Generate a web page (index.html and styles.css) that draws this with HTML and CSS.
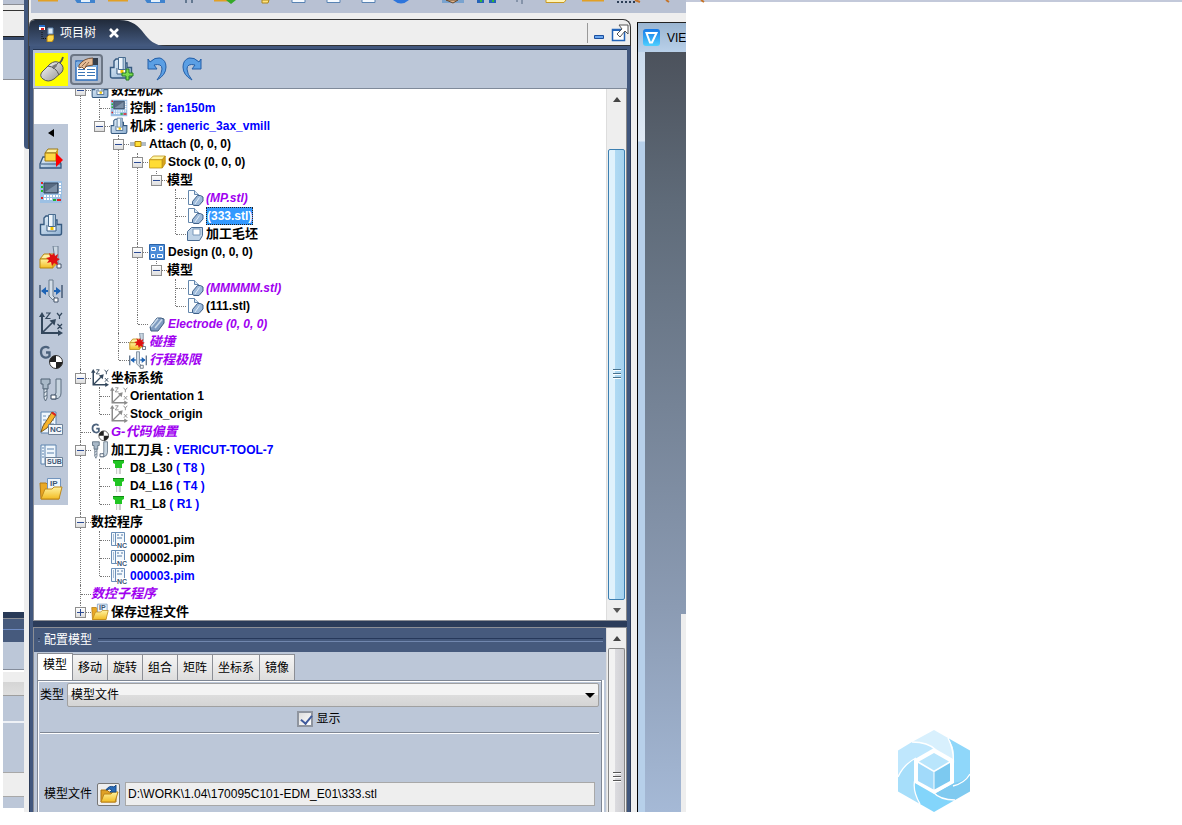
FILE: index.html
```html
<!DOCTYPE html>
<html lang="zh-CN">
<head>
<meta charset="utf-8">
<title>项目树</title>
<link rel="stylesheet" href="styles.css">
</head>
<body>
<svg class="defs" aria-hidden="true">
  <defs>
    <linearGradient id="gSteel" x1="0" y1="0" x2="1" y2="1"><stop offset="0" stop-color="#e6f1fa"/><stop offset="1" stop-color="#8fb0d2"/></linearGradient>
    <linearGradient id="gGold" x1="0" y1="0" x2="0" y2="1"><stop offset="0" stop-color="#fff3a0"/><stop offset="1" stop-color="#f2bb22"/></linearGradient>
    <linearGradient id="gMouse" x1="0" y1="0" x2="1" y2="1"><stop offset="0" stop-color="#fff"/><stop offset="1" stop-color="#8e8e8e"/></linearGradient>
    <linearGradient id="gTab" x1="0" y1="0" x2="0" y2="1"><stop offset="0" stop-color="#212b3b"/><stop offset="1" stop-color="#445a80"/></linearGradient>
    <linearGradient id="gView" x1="0" y1="0" x2="0" y2="1"><stop offset="0" stop-color="#1679e8"/><stop offset="1" stop-color="#4fd0ff"/></linearGradient>
  </defs>
  <symbol id="machine" viewBox="0 0 24 24">
    <path d="M1.500 11.500H5V5l2-2h4v4h7v4.500h4.500V20q0 2-2 2h-17q-2 0-2-2z" fill="url(#gSteel)" stroke="#365a80" stroke-width="1.400"/>
    <path d="M8 12v6h9v-6" fill="#fff" stroke="#365a80"/>
    <path d="M9.500 1.500h7v12h-7z" fill="#eef5fb" stroke="#486b8f"/><path d="M14.500 2v11" stroke="#7e9fbd" stroke-width="2"/><path d="M11.500 14h3v3h-3z" fill="#f3c400"/>
  </symbol>
  <symbol id="control" viewBox="0 0 24 24">
    <path d="M1 1h22v22H1z" fill="#9cc0e4"/><path d="M5 3h14v10H5z" fill="#586b82" stroke="#34475d"/><path d="M6 12L18 4v8z" fill="#7d91a8"/>
    <path d="M2 3h2M2 18h2" stroke="#d22" stroke-width="2"/><path d="M2 7h2M2 11h2" stroke="#2b2" stroke-width="2"/>
    <path d="M20 4h2M20 7h2M20 10h2M20 13h2M5 16h16M5 19h8" stroke="#fff" stroke-width="2" stroke-dasharray="2 1"/><path d="M14 20h3" stroke="#2a3" stroke-width="2"/><path d="M18 20h4" stroke="#d22" stroke-width="2"/>
  </symbol>
  <symbol id="stock" viewBox="0 0 24 24"><path d="M2 9l5-5h16l-4 5z" fill="#fff5a2" stroke="#b98d12"/><path d="M2 9h17v11H2z" fill="#ffdc35" stroke="#b98d12"/><path d="M19 9l4-5v10l-4 6z" fill="#d9a31a" stroke="#b98d12"/></symbol>
  <symbol id="setup" viewBox="0 0 24 24">
    <path d="M1 21v-4l3-7h15l3 7v4z" fill="url(#gSteel)" stroke="#365a80" stroke-width="1.300"/><path d="M2 17h20" stroke="#365a80"/>
    <path d="M6 6l3-4h10l-2 4z" fill="#fff3a0" stroke="#9b7715"/><path d="M6 6h11v8H6z" fill="#ffd842" stroke="#9b7715"/><path d="M17 6l2-4v8l-2 4z" fill="#d7a01a"/><path d="M17 6l7 7-7 7z" fill="#f00"/>
  </symbol>
  <symbol id="collide" viewBox="0 0 24 24">
    <path d="M1 13l4-5h13l-4 5z" fill="#fff0a0" stroke="#b58612"/><path d="M1 13h13v9H1z" fill="url(#gGold)" stroke="#b58612"/><path d="M14 13l4-4v9l-4 4z" fill="#e0a51f"/>
    <path d="M14 0h5v17l-3-3z" fill="#cbd7e2" stroke="#6c7f92"/><path d="M18 18h4v4h-4z" fill="#fff" stroke="#45556a"/>
    <path d="M15 7l1 3 3-2-1 4 3 1-3 2 1 4-4-2-2 3-1-4-4 1 2-3-3-2 4-1-1-4 3 2z" fill="#e01010"/>
  </symbol>
  <symbol id="limit" viewBox="0 0 24 24">
    <path d="M1 6v13M23 6v13" stroke="#455b75" stroke-width="1.500"/><path d="M3 12h6M15 12h6" stroke="#1d63b5" stroke-width="2"/><path d="M2 12l5-4v8zM22 12l-5-4v8z" fill="#1d63b5"/>
    <path d="M10 1h4v16l3 3-3 1-4-4z" fill="#d4dee8" stroke="#687a8c"/><path d="M15 19h4v4h-4z" fill="#fff" stroke="#45556a"/>
  </symbol>
  <symbol id="axes" viewBox="0 0 24 24">
    <path d="M3 4v17h17" fill="none" stroke="currentColor" stroke-width="2"/><path d="M3 0l3 5H0zM24 21l-5 3v-6z" fill="currentColor"/><path d="M3 21L13 11" stroke="currentColor" stroke-width="1.700"/><path d="M17 7l-1.500 6.500-5-5z" fill="currentColor"/>
    <path d="M7 1h4L7 6.500h4.500M18 1l2.500 3L23 1M20.500 4v3M18.500 12l4.500 5M23 12l-4.500 5" fill="none" stroke="currentColor" stroke-width="1.200"/>
  </symbol>
  <symbol id="gcode" viewBox="0 0 24 24">
    <path d="M10 3.500C8.500 1 2 1 2 7s6 7 8.500 4V7.500H7" fill="none" stroke="#4c627c" stroke-width="2.300"/>
    <circle cx="17" cy="17" r="6.500" fill="#fff" stroke="#333"/><path d="M17 17v-6.500A6.500 6.500 0 0 0 10.500 17zM17 17v6.500a6.500 6.500 0 0 0 6.500-6.500z" fill="#222"/>
  </symbol>
  <symbol id="tools" viewBox="0 0 24 24">
    <path d="M2 1h9v5H9v5H4V6H2z" fill="#a9b9c8" stroke="#4e6072"/><path d="M5 11h3v9l-1.500 3L5 20z" fill="#e5ecf2" stroke="#5b6c7e"/><path d="M5 15l3-2M5 19l3-2" stroke="#5b6c7e"/>
    <path d="M17 1h5v14q0 5-5 6h-4l4-6z" fill="#c8d5e0" stroke="#5b6c7e"/><path d="M12 17h5v4h-5z" fill="#fff" stroke="#34475d"/>
  </symbol>
  <symbol id="ncedit" viewBox="0 0 24 24">
    <path d="M2 1h15v21H2z" fill="#eff6fc" stroke="#5d83ae"/><path d="M4 5h3M9 5h6M4 9h3M9 9h6M4 13h3M9 13h6" stroke="#6a90bc"/>
    <path d="M2 21l2-6L13 1l4 3L8 17z" fill="#f6b42c" stroke="#7b5c22"/><path d="M12 2l4 3 1-2-3-2z" fill="#d22"/><path d="M9.500 13.500h14v10h-14z" fill="#f4f7fa" stroke="#6f8298"/>
  </symbol>
  <symbol id="sub" viewBox="0 0 24 24">
    <path d="M2 1h15v19H2zM6 1v19" fill="#eff6fc" stroke="#5d83ae"/><path d="M3 4h2M3 7h2M3 10h2M3 13h2M8 5h7M8 9h7" stroke="#5d83ae"/><path d="M6.500 13.500h17v9h-17z" fill="#f4f7fa" stroke="#6f8298"/>
  </symbol>
  <symbol id="ipfile" viewBox="0 0 24 24">
    <path d="M1 6h6l2 2h11v14H2z" fill="#e9a825" stroke="#b67c12"/><path d="M8.500 1.500h13v12h-13z" fill="#eff6fc" stroke="#7294bd"/><path d="M2 22l4-10h7l2-2h8l-3 12z" fill="url(#gGold)" stroke="#c08919"/>
  </symbol>
  <symbol id="attach" viewBox="0 0 18 18"><path d="M1 8h16M1 10h16" stroke="#65788c"/><path d="M6 6.500h6v5H6z" fill="#ffdf37" stroke="#ad8312"/></symbol>
  <symbol id="stl" viewBox="0 0 18 18"><path d="M2.500 1.500h6l4 4v10h-10z" fill="#fafdff" stroke="#6487ad"/><path d="M8.500 1.500v4h4" fill="#d7e7f5" stroke="#6487ad"/><path d="M6.500 15.500v-3l5-6h3l2.500 1.500v4l-4 4.500h-5z" fill="#9dbada" stroke="#3e6088"/><path d="M9 15l4.500-6.500" fill="none" stroke="#e1edf7"/></symbol>
  <symbol id="blank" viewBox="0 0 18 18"><path d="M5.500 2.500h11v8l-3 5h-12v-9z" fill="#bed2e6" stroke="#496b92"/><path d="M7 4h7v6H7z" fill="#fff" stroke="#7898ba"/></symbol>
  <symbol id="design" viewBox="0 0 18 18"><path d="M1.500 1.500h15v15h-15z" fill="#4d8dd8" stroke="#2a63a8"/><path d="M3.500 4.500h4v3h-4zM11.500 3.500h3v4h-3zM3.500 11.500h3v3h-3zM9.500 11.500h5v3h-5z" fill="none" stroke="#fff"/></symbol>
  <symbol id="electrode" viewBox="0 0 18 18"><path d="M2 12l7-9h4l3 1v4l-6 8H3z" fill="#7f9cc0" stroke="#3e5c80"/><path d="M3 12l7-8.500M7 13l7-8.500" stroke="#c9daea" stroke-width="1.500"/></symbol>
  <symbol id="pin" viewBox="0 0 18 18"><path d="M3 1h11v3l-2 1v4H5V5L3 4z" fill="#20c522"/><path d="M3 1h11v1H3z" fill="#108a12"/><path d="M6 9h5v6H6z" fill="#ccc"/><path d="M7 9h2v6H7z" fill="#f4f4f4"/></symbol>
  <symbol id="nc" viewBox="0 0 18 18"><path d="M1.500 1.500h13v13h-13zM5.500 1.500v13" fill="#f4f9fd" stroke="#6b8fb8"/><path d="M3 4h1M3 6h1M3 8h1M3 10h1M7 4h2M11 4h2M7 7h5" stroke="#5379a5"/><path d="M7 11h11v7H7z" fill="#fff"/></symbol>
</svg>

<main class="page">
  <section class="workspace">
    <aside class="neighbour">
      <div class="n-head"></div><div class="n-bar"></div><div class="n-title"></div><div class="n-navy"></div><div class="n-tool"></div>
      <div class="n-blank"></div>
      <div class="n-split"></div><div class="n-caption"></div><div class="n-gap"></div><div class="n-combo"></div><div class="n-row"></div><div class="n-body"></div><div class="n-field"></div><div class="n-end"></div>
    </aside>
    <div class="gutter"></div>
    <div class="desk">
      <div class="strip">
        <svg class="strip-icons" viewBox="0 0 680 5" width="680" height="5" aria-hidden="true">
          <path d="M7 0h20M77 0h20M183 0h18M551 0h22" stroke="#e2a024" stroke-width="3"/>
          <path d="M44 0h20v3H46zM114 0h20v3h-18z" fill="#3f83ce"/><path d="M50 0h9v2h-9zM120 0h9v2h-9z" fill="#e6f2fc"/>
          <path d="M155 0v3M161 0v3" stroke="#637890" stroke-width="2"/><path d="M195 0l5 4 5-4z" fill="#34a928"/><path d="M231 0h7l-1 3h-6z" fill="#ffe37a" stroke="#ac861c"/>
          <path d="M261 0v2.500h13V0M296 0v2.500h13V0M331 0v2.500h13V0" fill="#f5faff" stroke="#5883b3"/><path d="M362 0q8 7 16 0z" fill="#2d75dc"/>
          <path d="M411 0h22v3h-22z" fill="#79a3cf"/><path d="M415 0l7 3 5-3z" fill="#e0b48b" stroke="#674a30"/><path d="M446 0h7v3h-7zM458 0h7v3h-7z" fill="#2563b8"/><path d="M449 0h2v2h-2zM461 0h2v2h-2z" fill="#32b836"/>
          <path d="M486 0v2M491 0v4" stroke="#526780"/><path d="M515 0v2.500h18l2-2.500" fill="#fff4b6" stroke="#c99920"/><path d="M586 2h18" stroke="#2b3d55" stroke-width="2" stroke-dasharray="2 2"/><path d="M604 0l5 2M635 0l3 2M670 0l3 2" stroke="#c4742a" stroke-width="2"/>
        </svg>
      </div>
      <div class="windows">
        <section class="panel">
          <header class="panel-head">
            <div class="tab-title">
              <svg class="tab-shape" viewBox="0 0 138 26" width="138" height="26" aria-hidden="true"><path d="M0 26V7q0-7 6-7h84c28 0 22 26 48 26z" fill="url(#gTab)"/></svg>
              <svg class="tab-icon" viewBox="0 0 16 18" width="16" height="18" aria-hidden="true"><path d="M1 1h6v5H1z" fill="#fff"/><path d="M1 1h6v2H1z" fill="#276fc8"/><path d="M3 4h3v2H3z" fill="#d22"/><path d="M10 4h5v6h-5z" fill="#dce9f7" stroke="#658bb5"/><path d="M4 8v8M5 14.500h4" stroke="#111" stroke-dasharray="1 1"/><path d="M9 13l2-2h5v4l-2 3H9z" fill="#ffd849" stroke="#a67b17"/></svg>
              <h1>项目树</h1>
              <button class="close" aria-label="关闭"><svg viewBox="0 0 12 12" width="12" height="12"><path d="M2 2l8 8M10 2l-8 8" stroke="#fff" stroke-width="2.600"/></svg></button>
            </div>
            <div class="window-tools">
              <button aria-label="最小化"><svg viewBox="0 0 12 18" width="12" height="18"><path d="M1.500 11.500h9v3h-9z" fill="#69a6ee" stroke="#1c4f9e"/></svg></button>
              <button aria-label="弹出"><svg viewBox="0 0 18 18" width="18" height="18"><path d="M1.500 5.500h12v11h-12z" fill="#fff" stroke="#2364b8" stroke-width="1.500"/><path d="M1 6h12" stroke="#2364b8" stroke-width="2"/><path d="M8 1h9v9l-3-3-5 6-3-3 5-5z" fill="#fff" stroke="#555"/></svg></button>
            </div>
          </header>
          <div class="panel-frame">
            <div class="toolbar">
              <button class="yellow" aria-label="鼠标"><svg viewBox="0 0 28 28" width="28" height="28"><path d="M18 9q5 0 7-7" fill="none" stroke="#555" stroke-width="1.800"/><path d="M4 17l8-8q5-4 10-1 5 4 2 9l-8 7q-6 4-11 0-4-3-1-7z" fill="url(#gMouse)" stroke="#555"/><path d="M10 11q8 1 11 9M15 14l5-6" fill="none" stroke="#555"/><path d="M14 11l4-2 1 2-3 3z" fill="#777"/></svg></button>
              <button class="pressed" aria-label="属性"><svg viewBox="0 0 26 24" width="26" height="24"><path d="M2 4h21v19H2z" fill="#fff" stroke="#2e6fbd" stroke-width="1.500"/><path d="M4 12.500h7M4 15.500h7M4 18.500h7M13 12.500h8M13 15.500h8M13 18.500h8" stroke="#3c76b7"/><path d="M2 5h21v5H2z" fill="#7eafe0"/><path d="M5 8q5-7 14-7v7l-6 1-3 3-2-2-3 1z" fill="#e6bc96" stroke="#735139"/><path d="M8 9l4-4M11 10l4-5" stroke="#8f6849"/><path d="M19 1h5v7h-5z" fill="#343e4c"/></svg></button>
              <button aria-label="添加机床"><svg viewBox="0 0 26 26" width="26" height="26"><use href="#machine" width="24" height="24"/><path d="M17 13h3v4h4v3h-4v4h-3v-4h-4v-3h4z" fill="#7ddd4f" stroke="#257c22"/></svg></button>
              <button aria-label="撤销"><svg viewBox="0 0 22 26" width="22" height="26"><path d="M2 3l2 3Q9 1 14 2q6 2 6 9 0 8-9 13 5-6 5-11 0-6-8-4l3 4H2z" fill="#5b9fe4" stroke="#245fa8"/></svg></button>
              <button aria-label="重做"><svg viewBox="0 0 22 26" width="22" height="26"><path d="M20 3l-2 3Q13 1 8 2q-6 2-6 9 0 8 9 13-5-6-5-11 0-6 8-4l-3 4h9z" fill="#5b9fe4" stroke="#245fa8"/></svg></button>
            </div>
            <div class="tree-area">
              <nav class="side" aria-label="工具">
                <button class="fold" aria-label="收起"><svg viewBox="0 0 6 8" width="6" height="8"><path d="M6 0v8L0 4z" fill="#000"/></svg></button>
                <button aria-label="安装"><svg><use href="#setup"/></svg></button>
                <button aria-label="控制"><svg><use href="#control"/></svg></button>
                <button aria-label="机床"><svg><use href="#machine"/></svg></button>
                <button aria-label="碰撞"><svg><use href="#collide"/></svg></button>
                <button aria-label="行程极限"><svg><use href="#limit"/></svg></button>
                <button aria-label="坐标系统"><svg><use href="#axes"/></svg></button>
                <button aria-label="G-代码偏置"><svg><use href="#gcode"/></svg></button>
                <button aria-label="加工刀具"><svg><use href="#tools"/></svg></button>
                <button aria-label="数控程序"><svg><use href="#ncedit"/><text x="11" y="21" class="icon-text">NC</text></svg></button>
                <button aria-label="数控子程序"><svg><use href="#sub"/><text x="8" y="20" class="icon-text small">SUB</text></svg></button>
                <button aria-label="过程文件"><svg><use href="#ipfile"/><text x="11" y="9" class="icon-text">IP</text></svg></button>
              </nav>
              <div class="tree-view">
                <ul class="tree" role="tree">
                  <li><div class="row"><button class="exp" aria-label="折叠"></button><svg><use href="#machine"/></svg><span class="zh">数控机床</span></div>
                    <ul>
                      <li><div class="row"><i></i><svg><use href="#control"/></svg><span class="zh">控制</span><span>&nbsp;:&nbsp;</span><span class="blue">fan150m</span></div></li>
                      <li><div class="row"><button class="exp" aria-label="折叠"></button><svg><use href="#machine"/></svg><span class="zh">机床</span><span>&nbsp;:&nbsp;</span><span class="blue">generic_3ax_vmill</span></div>
                        <ul>
                          <li><div class="row"><button class="exp" aria-label="折叠"></button><svg><use href="#attach"/></svg><span>Attach (0, 0, 0)</span></div>
                            <ul>
                              <li><div class="row"><button class="exp" aria-label="折叠"></button><svg><use href="#stock"/></svg><span>Stock (0, 0, 0)</span></div>
                                <ul><li><div class="row"><button class="exp" aria-label="折叠"></button><span class="zh">模型</span></div>
                                  <ul>
                                    <li><div class="row"><i></i><svg><use href="#stl"/></svg><span class="purple">(MP.stl)</span></div></li>
                                    <li><div class="row"><i></i><svg><use href="#stl"/></svg><span class="selected">(333.stl)</span></div></li>
                                    <li><div class="row"><i></i><svg><use href="#blank"/></svg><span class="zh">加工毛坯</span></div></li>
                                  </ul></li></ul>
                              </li>
                              <li><div class="row"><button class="exp" aria-label="折叠"></button><svg><use href="#design"/></svg><span>Design (0, 0, 0)</span></div>
                                <ul><li><div class="row"><button class="exp" aria-label="折叠"></button><span class="zh">模型</span></div>
                                  <ul>
                                    <li><div class="row"><i></i><svg><use href="#stl"/></svg><span class="purple">(MMMMM.stl)</span></div></li>
                                    <li><div class="row"><i></i><svg><use href="#stl"/></svg><span>(111.stl)</span></div></li>
                                  </ul></li></ul>
                              </li>
                              <li><div class="row"><i></i><svg><use href="#electrode"/></svg><span class="purple">Electrode (0, 0, 0)</span></div></li>
                            </ul>
                          </li>
                          <li><div class="row"><i></i><svg><use href="#collide"/></svg><span class="zh purple">碰撞</span></div></li>
                          <li><div class="row"><i></i><svg><use href="#limit"/></svg><span class="zh purple">行程极限</span></div></li>
                        </ul>
                      </li>
                    </ul>
                  </li>
                  <li><div class="row"><button class="exp" aria-label="折叠"></button><svg><use href="#axes"/></svg><span class="zh">坐标系统</span></div>
                    <ul>
                      <li><div class="row"><i></i><svg class="dim"><use href="#axes"/></svg><span>Orientation 1</span></div></li>
                      <li><div class="row"><i></i><svg class="dim"><use href="#axes"/></svg><span>Stock_origin</span></div></li>
                    </ul>
                  </li>
                  <li><div class="row"><i></i><svg><use href="#gcode"/></svg><span class="zh purple">G-代码偏置</span></div></li>
                  <li><div class="row"><button class="exp" aria-label="折叠"></button><svg><use href="#tools"/></svg><span class="zh">加工刀具</span><span>&nbsp;:&nbsp;</span><span class="blue">VERICUT-TOOL-7</span></div>
                    <ul>
                      <li><div class="row"><i></i><svg><use href="#pin"/></svg><span>D8_L30&nbsp;</span><span class="blue">( T8 )</span></div></li>
                      <li><div class="row"><i></i><svg><use href="#pin"/></svg><span>D4_L16&nbsp;</span><span class="blue">( T4 )</span></div></li>
                      <li><div class="row"><i></i><svg><use href="#pin"/></svg><span>R1_L8&nbsp;</span><span class="blue">( R1 )</span></div></li>
                    </ul>
                  </li>
                  <li><div class="row"><button class="exp" aria-label="折叠"></button><span class="zh">数控程序</span></div>
                    <ul>
                      <li><div class="row"><i></i><svg><use href="#nc"/><text x="7" y="17" class="icon-text tiny">NC</text></svg><span>000001.pim</span></div></li>
                      <li><div class="row"><i></i><svg><use href="#nc"/><text x="7" y="17" class="icon-text tiny">NC</text></svg><span>000002.pim</span></div></li>
                      <li><div class="row"><i></i><svg><use href="#nc"/><text x="7" y="17" class="icon-text tiny">NC</text></svg><span class="blue">000003.pim</span></div></li>
                    </ul>
                  </li>
                  <li><div class="row"><i></i><span class="zh purple">数控子程序</span></div></li>
                  <li><div class="row"><button class="exp plus" aria-label="展开"></button><svg><use href="#ipfile"/><text x="8" y="7" class="icon-text tiny">IP</text></svg><span class="zh">保存过程文件</span></div></li>
                </ul>
              </div>
              <div class="scroll main-scroll">
                <button class="arrow" aria-label="向上"><span class="up"></span></button>
                <div class="thumb"><span class="grip"></span></div>
                <button class="arrow" aria-label="向下"><span class="down"></span></button>
              </div>
            </div>
            <div class="config">
              <div class="config-main">
                <h2><span>配置模型</span></h2>
                <div class="tabs" role="tablist">
                  <button role="tab" aria-selected="true" class="active">模型</button><button role="tab">移动</button><button role="tab">旋转</button><button role="tab">组合</button><button role="tab">矩阵</button><button role="tab">坐标系</button><button role="tab">镜像</button>
                </div>
                <div class="pane">
                  <div class="field"><label for="type">类型</label><select id="type"><option>模型文件</option></select></div>
                  <div class="check"><input type="checkbox" id="show" checked><label for="show">显示</label></div>
                  <hr>
                  <div class="field file"><label for="path">模型文件</label><button class="open" aria-label="打开"><svg viewBox="0 0 20 20" width="20" height="20"><path d="M2 6h6l2 2h7v10H2z" fill="#dfa126" stroke="#ad7613"/><path d="M2 18l3-8h7l2-2h5l-3 10z" fill="url(#gGold)" stroke="#bd8419"/><path d="M7 6q3-5 8-3l2-2v7h-6l2-2q-2-2-6 0z" fill="#286bb8" stroke="#174a88"/></svg></button><input id="path" type="text" value="D:\WORK\1.04\170095C101-EDM_E01\333.stl" readonly></div>
                </div>
              </div>
              <div class="scroll config-scroll">
                <button class="arrow" aria-label="向上"><span class="up"></span></button>
                <div class="thumb"><span class="grip"></span></div>
              </div>
            </div>
          </div>
        </section>
        <section class="viewer">
          <header><svg viewBox="0 0 17 17" width="17" height="17" aria-hidden="true"><rect x="0" y="0" width="17" height="17" rx="3" fill="url(#gView)"/><path d="M3.500 4h10L9 13.500H7z" fill="none" stroke="#fff" stroke-width="2"/></svg><span>VIEW</span></header>
          <div class="scene"></div>
        </section>
      </div>
    </div>
  </section>
  <section class="outside">
    <svg class="logo" viewBox="0 0 72 82" width="72" height="82" role="img" aria-label="标志">
      <path d="M0 20.500L14 12Q34 12 38 19L19 30Q6 35 0 47z" fill="#bfe7fd"/>
      <path d="M14 12L36 0l14 8q8 15 5 27L36 19Q28 12 14 12z" fill="#d8f0fd"/>
      <path d="M50 8l22 12.500V44q-6 8-16 13V26q0-10-6-18z" fill="#8fd7fa"/>
      <path d="M72 44v17.500L57 70Q44 70 36 64l20-11q11-2 16-9z" fill="#7fcaf0"/>
      <path d="M57 70L36 82 22 74q-8-12-6-22l20 11q8 7 21 7z" fill="#83d5fb"/>
      <path d="M0 47q6-13 16-18v24q0 12 6 21L0 61.500z" fill="#a6defa"/>
      <path d="M14 12q16 0 24 8M50 8q7 14 5 30M72 44q-5 9-17 12M57 70q-15 0-22-8M22 74q-8-14-5-25M0 47q6-13 18-19" stroke="#fff" fill="none" stroke-width="1.300"/>
      <path d="M36 18l20 11.500v23L36 64 16 52.500v-23z" fill="#fff"/>
      <path d="M36 23l15 8.500-15 9-15-9z" fill="#b9e5fc"/><path d="M20 33l15.500 9v17.500L20 51z" fill="#a1dafa"/><path d="M52 33l-15.500 9v17.500L52 51z" fill="#7cc9f0"/>
    </svg>
  </section>
</main>
</body>
</html>
```
FILE: styles.css
```css
* { box-sizing: border-box; }
body { margin: 0; background: #fff; color: #000; font: 12px/16px "Liberation Sans", "Noto Sans CJK SC", sans-serif; }
button { margin: 0; padding: 0; border: 0; background: none; font: inherit; color: inherit; }
ul { list-style: none; margin: 0; padding: 0; }
svg { display: block; flex: none; }
.defs { position: absolute; width: 0; height: 0; }
.icon-text { font: bold 8px "Liberation Sans", sans-serif; fill: #3c5675; }
.icon-text.small { font-size: 7px; }
.icon-text.tiny { font-size: 7px; }

.page { display: grid; grid-template-columns: minmax(0, 1fr) 496px; height: 100vh; min-height: 760px; padding-bottom: 13px; }
.workspace { display: flex; min-width: 0; min-height: 0; }

/* Edge of the neighbouring window */
.neighbour { width: 24px; padding: 0 0 4px 3px; display: flex; flex-direction: column; }
.n-head { height: 5px; background: #b8c1d3; border-bottom: 1px solid #8b8e95; }
.n-bar { height: 6px; background: #eee; border-bottom: 1px solid #333; }
.n-title { height: 25px; background: #eee; }
.n-navy { height: 4px; background: #35496b; border-top: 1px solid #222; }
.n-tool { height: 40px; background: #bcc7d8; border-bottom: 1px solid #8b8e95; }
.n-blank { flex: 1; }
.n-split { height: 7px; background: #293a57; border-bottom: 1px solid #8b8e95; }
.n-caption { height: 23px; background: linear-gradient(#465a7d 10px, #6f8cc4 10px, #6f8cc4 11px, #465a7d 11px); }
.n-gap { height: 28px; background: #bcc7d8; border-bottom: 1px solid #858d9b; }
.n-combo { height: 26px; background: linear-gradient(#fff 2px, #eee 2px, #eee 12px, #d5d5d5 12px, #dedede); border-bottom: 1px solid #9e9e9e; }
.n-row { height: 27px; background: #bcc7d8; border-bottom: 2px solid #eef1f6; }
.n-body { height: 50px; background: #bcc7d8; border-bottom: 1px solid #a8a8a8; }
.n-field { height: 24px; background: #eee; border-bottom: 1px solid #a8a8a8; }
.n-end { height: 11px; background: #bcc7d8; }

.gutter { width: 5px; background: #eee; }
.gutter::before { content: ""; display: block; height: 149px; background: #41577d; border-right: 1px solid #444; border-bottom-left-radius: 4px; }
.desk { flex: 1; min-width: 0; display: flex; flex-direction: column; background: #eee; }
.strip { position: relative; height: 13px; margin-left: 2px; background: #b8c1d3; }
.strip-icons { overflow: visible; position: absolute; top: 0; left: 0; z-index: 1; }
.windows { flex: 1; min-height: 0; display: flex; gap: 6px; }

/* Project panel */
.panel { flex: 1; min-width: 0; display: flex; flex-direction: column; padding-top: 6px; }
.panel-head { height: 27px; display: flex; justify-content: space-between; border: 1px solid #333; border-left: 0; border-radius: 6px 8px 0 0; }
.tab-title { position: relative; display: flex; align-items: center; gap: 6px; padding-left: 9px; width: 138px; color: #fff; }
.tab-shape { position: absolute; left: 0; top: 0; }
.tab-icon, .tab-title h1, .close { position: relative; }
h1 { margin: 0; font-size: 12px; font-weight: normal; }
.close { margin-left: 6px; }
.window-tools { display: flex; align-items: center; gap: 6px; margin: 3px 1px 2px; padding-left: 5px; border-left: 1px solid #999; }
.panel-frame { flex: 1; min-height: 0; display: flex; flex-direction: column; padding: 3px 3px 0; background: #41577d; border-left: 1px solid #2b3b59; border-right: 1px solid #2b3b59; }
.toolbar { height: 40px; display: flex; align-items: center; gap: 2px; padding: 0 2px; background: #bcc7d8; border-top: 1px solid #243550; border-bottom: 1px solid #7f8a9a; }
.toolbar button { width: 33px; height: 33px; display: grid; place-items: center; }
.toolbar .yellow { background: #ff0; }
.toolbar .pressed { height: 31px; border: 2px solid #6c7685; border-radius: 4px; background: #aeb8c8; }

.tree-area { flex: 1; min-height: 0; display: flex; background: #fff; border-left: 1px solid #8b8e95; border-bottom: 1px solid #8b8e95; box-shadow: 0 6px #2b3c5a; }
.side { align-self: flex-start; width: 34px; margin-top: 35px; background: #bcc7d8; color: #33475c; }
.side button { width: 100%; height: 33px; display: grid; place-items: center; }
.side .fold { height: 18px; }
.side button:not(.fold) svg { width: 24px; height: 24px; }
.tree-view { flex: 1; min-width: 0; overflow: hidden; display: flex; flex-direction: column; justify-content: flex-end; padding-left: 3px; }

/* Tree and its connector lines */
.tree { margin-bottom: -1px; font-weight: bold; white-space: nowrap; }
.tree ul { padding-left: 19px; }
.tree li { position: relative; }
.tree li::before { content: ""; position: absolute; left: 9px; top: 0; bottom: 0; border-left: 1px dotted #777; }
.tree li:last-child::before { bottom: auto; height: 9px; }
.row { position: relative; height: 18px; display: flex; align-items: center; }
.row::before { content: ""; position: absolute; left: 10px; top: 9px; width: 10px; border-top: 1px dotted #777; }
.row > i { width: 20px; }
.row svg { width: 18px; height: 18px; margin-right: 2px; color: #33475c; }
.row svg.dim { color: #8b8b8b; }
.exp { position: relative; width: 11px; height: 11px; margin: 0 5px 0 4px; border: 1px solid #8e8e8e; background: linear-gradient(#2a4a94, #2a4a94) center / 7px 1px no-repeat, linear-gradient(#fff, #ddd); }
.exp.plus { background: linear-gradient(#2a4a94, #2a4a94) center / 7px 1px no-repeat, linear-gradient(#2a4a94, #2a4a94) center / 1px 7px no-repeat, linear-gradient(#fff, #ddd); }
.zh { font-size: 13px; }
.blue { color: #00f; }
.purple { color: #a000f0; font-style: italic; }
.selected { height: 18px; line-height: 16px; border: 1px dotted #222; background: #3399ff; color: #fff; }

.scroll { width: 21px; padding: 0 1px; display: flex; flex-direction: column; background: #eee; border-left: 1px solid #ddd; border-right: 1px solid #888; }
.arrow { height: 20px; display: grid; place-items: center; }
.up, .down { width: 0; height: 0; border: 4px solid transparent; }
.up { border-top: 0; border-bottom: 5px solid #444; }
.down { border-bottom: 0; border-top: 5px solid #555; }
.thumb { flex: 1; display: flex; justify-content: center; align-items: center; border: 1px solid #3c7fb1; border-radius: 2px; background: linear-gradient(90deg, #e0f2fc 0 6px, #b0daf3 6px, #a5d2ef); }
.main-scroll .thumb { margin-top: 40px; }
.grip { width: 8px; height: 11px; background: repeating-linear-gradient(#48718c 0 1px, #fff 1px 2px, transparent 2px 4px); }

/* Model configuration */
.config { display: flex; margin-top: 6px; background: #bcc7d8; border-top: 1px solid #8b8e95; border-left: 1px solid #8b8e95; }
.config-main { flex: 1; min-width: 0; }
h2 { margin: 0; height: 24px; display: flex; align-items: center; gap: 6px; padding: 0 3px 0 4px; background: #465a7d; color: #fff; font-size: 12px; font-weight: normal; }
h2::before, h2::after { content: ""; height: 2px; border-top: 1px solid #26385a; border-bottom: 1px solid #7187ae; }
h2::before { width: 2px; margin-right: -2px; }
h2::after { flex: 1; }
.tabs { display: flex; align-items: flex-end; padding: 1px 3px 0; }
.tabs button { height: 26px; padding: 0 5px; border: 1px solid #8b8e95; border-left: 0; border-bottom: 0; background: linear-gradient(#f5f5f5, #ddd); }
.tabs .active { height: 27px; padding: 0 5px 4px; border-left: 1px solid #8b8e95; background: #fff; }
.pane { margin: 0 4px 0 3px; padding: 2px 2px 6px 1px; border: 1px solid #7f8794; border-bottom: 0; box-shadow: inset 1px 1px #fff, 2px 0 #fff; }
.field { display: flex; align-items: center; gap: 3px; }
.field label { flex: none; padding-left: 1px; }
select { flex: 1; min-width: 0; height: 24px; padding: 0 3px; appearance: none; border: 1px solid #a0a0a0; border-radius: 2px; font: inherit; color: #000; background: linear-gradient(#f4f4f4 0 48%, #dedede 48%, #d4d4d4); }
.field:first-child { position: relative; }
.field:first-child::after { content: ""; position: absolute; right: 4px; top: 10px; border: 5px solid transparent; border-top-color: #000; border-bottom: 0; pointer-events: none; }
.check { display: flex; justify-content: center; align-items: center; gap: 3px; height: 24px; }
.check input { appearance: none; width: 16px; height: 16px; margin: 0; border: 2px solid #8f959f; background: #f4f4f4 linear-gradient(135deg, #ddd, #fff); }
.check input:checked::after { content: ""; display: block; width: 5px; height: 9px; margin: 0 0 0 4px; border: solid #3f5a9c; border-width: 0 2px 2px 0; transform: rotate(40deg); }
hr { height: 2px; margin: 1px 0 48px 1px; border: 0; border-top: 1px solid #7f8794; border-bottom: 1px solid #fff; }
.file { gap: 5px; padding: 0 4px; }
.open { width: 23px; height: 23px; display: grid; place-items: center; border: 1px solid #777; border-radius: 2px; background: #eee; }
.file input { flex: 1; min-width: 0; height: 24px; padding: 0 2px; border: 1px solid #a8a8a8; background: #eee; font: inherit; color: #000; }
.config-scroll .thumb { align-items: flex-end; padding-bottom: 29px; border-color: #888; border-bottom: 0; border-radius: 2px 2px 0 0; background: linear-gradient(90deg, #f3f3f3 0 6px, #dcdce0 6px, #cfcfd3); }
.config-scroll .grip { background: repeating-linear-gradient(#555 0 1px, #fff 1px 2px, transparent 2px 4px); }

/* 3D view window */
.viewer { width: 49px; margin-top: 9px; display: flex; flex-direction: column; overflow: hidden; border-left: 1px solid #000; border-top: 1px solid #222; background: linear-gradient(#c3d6ea, #e0eaf5 118px, #b7d0ea 119px); clip-path: polygon(0 0, 100% 0, 100% calc(100% - 198px), calc(100% - 5px) calc(100% - 198px), calc(100% - 5px) 100%, 0 100%); }
.viewer header { height: 29px; display: flex; align-items: center; gap: 7px; padding-left: 5px; background: linear-gradient(#9ab5d1, #b9d0e9); }
.scene { flex: 1; margin-left: 7px; background: linear-gradient(#4c525c, #5f6b79 20%, #8b9bb3 73%, #a5b9d6); }

.outside { display: flex; flex-direction: column; justify-content: flex-end; align-items: center; border-top: 2px solid #c3c9da; }
```
